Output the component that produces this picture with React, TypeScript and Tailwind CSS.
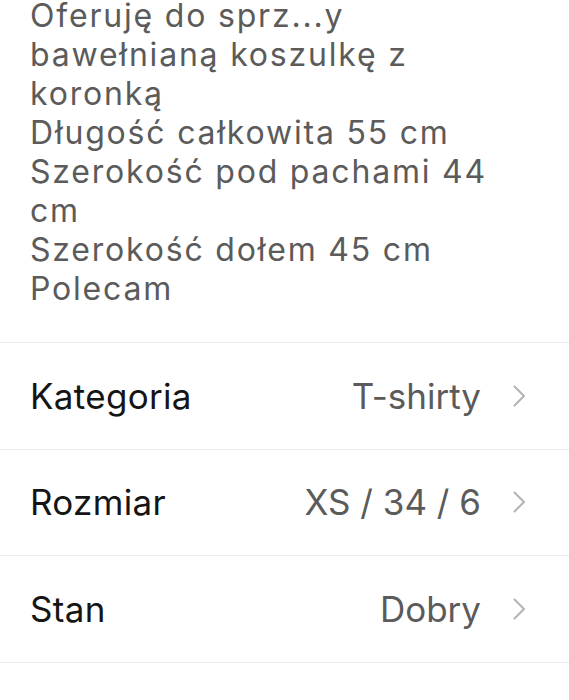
import React from 'react';

interface Attribute {
  label: string;
  value: string;
}

// wrapped the same way as the listing text
const descriptionLines = [
  'Oferuję do sprz...y',
  'bawełnianą koszulkę z',
  'koronką',
  'Długość całkowita 55 cm',
  'Szerokość pod pachami 44',
  'cm',
  'Szerokość dołem 45 cm',
  'Polecam',
];

const attributes: Attribute[] = [
  { label: 'Kategoria', value: 'T-shirty' },
  { label: 'Rozmiar', value: 'XS / 34 / 6' },
  { label: 'Stan', value: 'Dobry' },
];

function Chevron() {
  return (
    <svg width="14" height="22" viewBox="0 0 14 22" fill="none" className="shrink-0">
      <path d="M2.5 1.5 L12 11 L2.5 20.5" stroke="#b3b3b3" strokeWidth="2" strokeLinecap="round" strokeLinejoin="round" />
    </svg>
  );
}

export default function App() {
  return (
    <div className="w-[569px] h-[700px] overflow-hidden bg-white font-['Inter',sans-serif]">
      {/* Description (first line sits tight against the top edge) */}
      <div className="px-[30px] pb-[34px]">
        {descriptionLines.map((line, i) => (
          <div
            key={i}
            className={
              i === 0
                ? 'text-[32px] leading-[31px] mb-[4px] tracking-[1.8px] text-[#5b5b5b] whitespace-nowrap'
                : 'text-[32px] leading-[39px] tracking-[1.8px] text-[#5b5b5b] whitespace-nowrap'
            }
          >
            {line}
          </div>
        ))}
      </div>

      {/* Attributes */}
      <div>
        {attributes.map(a => (
          <div key={a.label} className="flex items-center h-[106.5px] border-t border-[#ececec] pl-[30px] pr-[43px]">
            <span className="text-[35px] tracking-[0.3px] text-[#151515] flex-1">{a.label}</span>
            <span className="text-[35px] text-[#5b5b5b] mr-[31px]">{a.value}</span>
            <Chevron />
          </div>
        ))}
        <div className="border-t border-[#ececec]" />
      </div>
    </div>
  );
}
